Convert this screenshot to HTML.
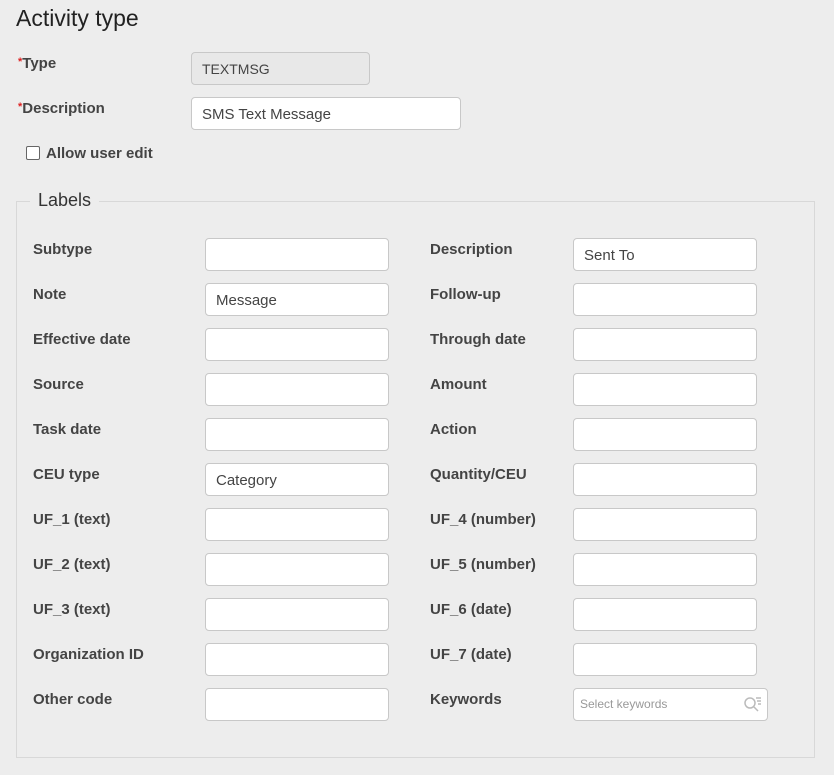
<!DOCTYPE html>
<html><head><style>
body{margin:0;width:834px;height:775px;background:#ededed;font-family:"Liberation Sans",sans-serif;position:relative;overflow:hidden;color:#333}
.a{position:absolute}
h1{position:absolute;left:16px;top:5px;margin:0;font-weight:normal;font-size:23px;color:#222}
.l{position:absolute;font-size:15px;font-weight:bold;color:#444}
.i{position:absolute;background:#fff;border:1px solid #c8c8c8;border-radius:4px;box-sizing:border-box;font-size:15px;color:#444;padding:8px 10px 0}
.s{color:#d22;font-size:11px;vertical-align:top;position:relative;top:1px}
</style></head><body>
<h1>Activity type</h1>
<div class="l" style="left:18px;top:55px"><span class="s">*</span>Type</div>
<div class="i" style="left:191px;top:52px;width:179px;height:33px;background:#e8e8e8;font-size:14px">TEXTMSG</div>
<div class="l" style="left:18px;top:100px"><span class="s">*</span>Description</div>
<div class="i" style="left:191px;top:97px;width:270px;height:33px">SMS Text Message</div>
<div class="a" style="left:26px;top:146px;width:12px;height:12px;border:1px solid #666;border-radius:2px;background:#fff"></div>
<div class="l" style="left:46px;top:145px">Allow user edit</div>
<div class="a" style="left:16px;top:201px;width:797px;height:555px;border:1px solid #d8d8d8"></div>
<div class="a" style="left:30px;top:190px;background:#ededed;padding:0 8px;font-size:18px;color:#333">Labels</div>
<div id="g"></div>
<script>
var L=[["Subtype",""],["Note","Message"],["Effective date",""],["Source",""],["Task date",""],["CEU type","Category"],["UF_1 (text)",""],["UF_2 (text)",""],["UF_3 (text)",""],["Organization ID",""],["Other code",""]];
var R=[["Description","Sent To"],["Follow-up",""],["Through date",""],["Amount",""],["Action",""],["Quantity/CEU",""],["UF_4 (number)",""],["UF_5 (number)",""],["UF_6 (date)",""],["UF_7 (date)",""],["Keywords",null]];
var h="";
for(var k=0;k<11;k++){var y=238+45*k;
h+='<div class="l" style="left:33px;top:'+(y+3)+'px">'+L[k][0]+'</div><div class="i" style="left:205px;top:'+y+'px;width:184px;height:33px">'+L[k][1]+'</div>';
h+='<div class="l" style="left:430px;top:'+(y+3)+'px">'+R[k][0]+'</div>';
if(R[k][1]===null)h+='<div class="i" style="left:573px;top:'+y+'px;width:195px;height:33px;font-size:12px;color:#999;padding:8px 6px 0">Select keywords<svg style="position:absolute;right:4px;top:7px" width="20" height="16"><circle cx="7" cy="7" r="5" fill="none" stroke="#bbb" stroke-width="1.5"/><path d="M11 11l4 4M13 2h5M14 5h4M15 8h3" stroke="#bbb" stroke-width="1.5"/></svg></div>';
else h+='<div class="i" style="left:573px;top:'+y+'px;width:184px;height:33px">'+R[k][1]+'</div>';}
document.getElementById("g").innerHTML=h;
</script>
</body></html>
